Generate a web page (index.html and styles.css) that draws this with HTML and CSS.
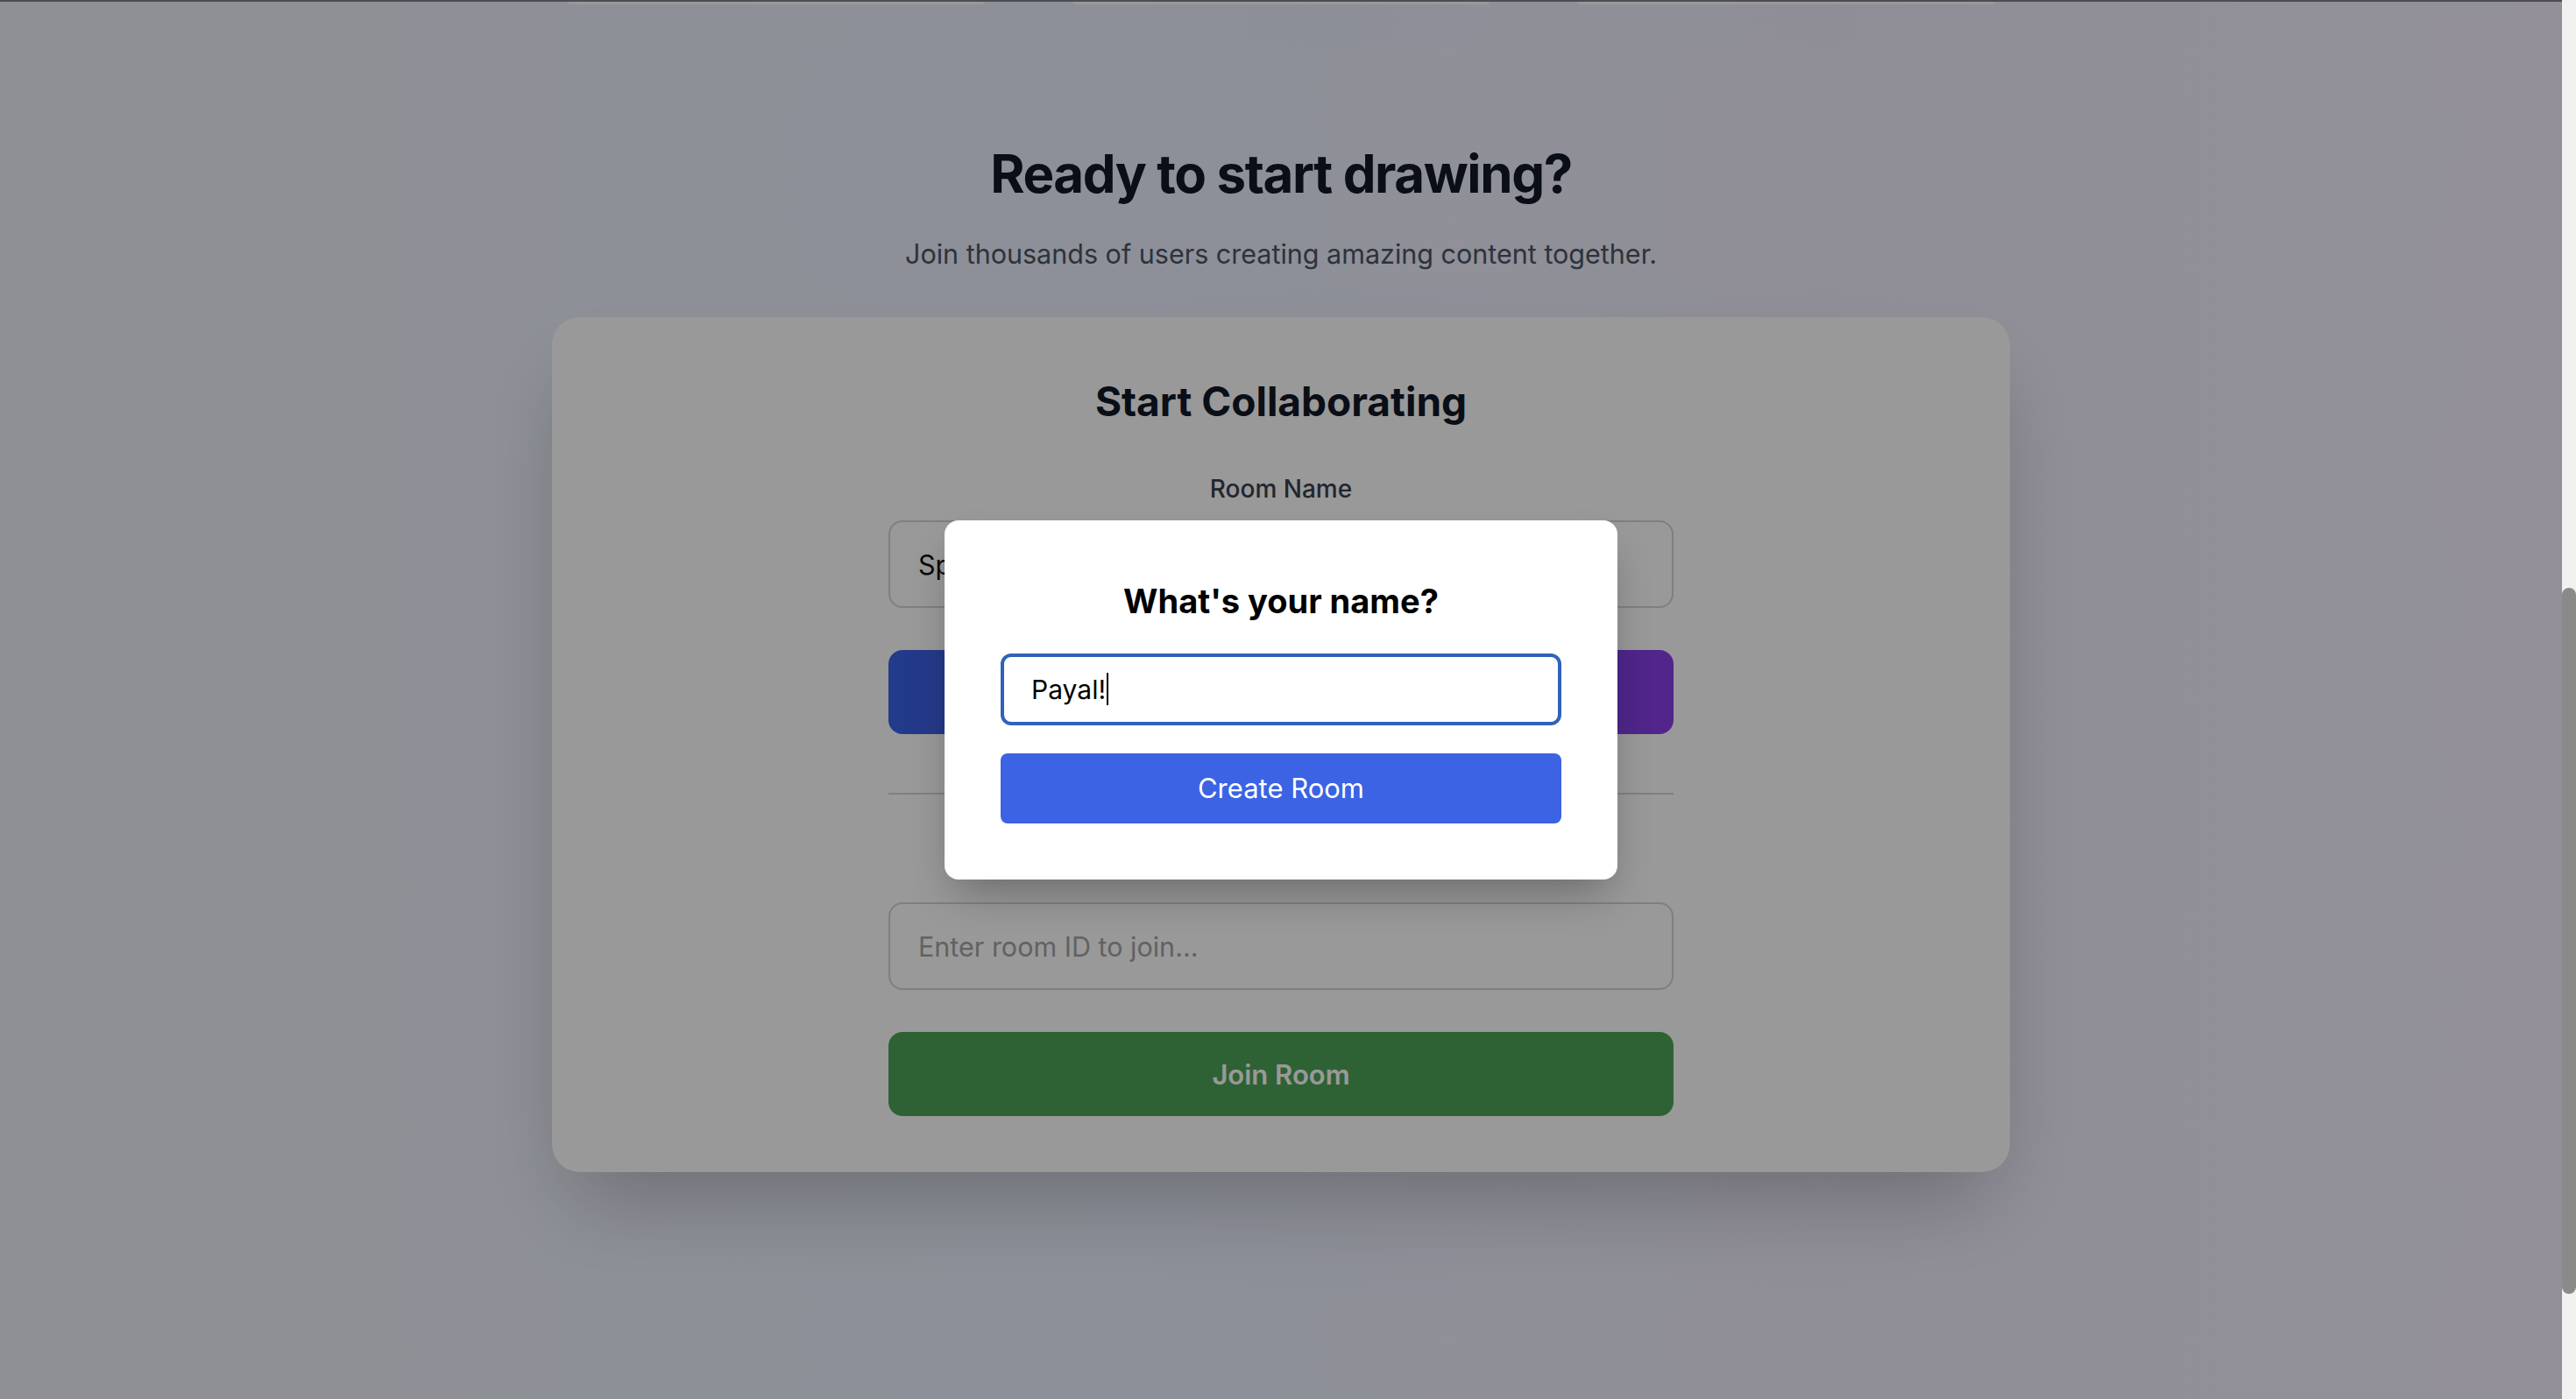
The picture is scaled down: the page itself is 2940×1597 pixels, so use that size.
FILE: index.html
```html
<!DOCTYPE html>
<html lang="en">
<head>
<meta charset="utf-8">
<title>Start Collaborating</title>
<link rel="stylesheet" href="styles.css">
</head>
<body>
<div class="window">
  <div class="page">
    <div class="topline"></div>
    <div class="features-tail">
      <div class="feature-card"></div>
      <div class="feature-card"></div>
      <div class="feature-card"></div>
    </div>
    <section class="cta">
      <h2 class="cta-title">Ready to start drawing?</h2>
      <p class="cta-sub">Join thousands of users creating amazing content together.</p>
      <div class="room-card">
        <h3 class="room-title">Start Collaborating</h3>
        <div class="room-form">
          <label class="field-label" for="room-name">Room Name</label>
          <input class="field" id="room-name" type="text" value="Sprint Planning">
          <button class="btn-gradient" type="button">Create New Room</button>
          <div class="divider"></div>
          <input class="field" type="text" placeholder="Enter room ID to join...">
          <button class="btn-join" type="button">Join Room</button>
        </div>
      </div>
    </section>
    <div class="backdrop">
      <div class="modal">
        <h4 class="modal-title">What's your name?</h4>
        <div class="name-field" role="textbox"><span>Payal!</span><span class="caret"></span></div>
        <button class="btn-create" type="button">Create Room</button>
      </div>
    </div>
  </div>
  <div class="scrollbar"><div class="thumb"></div></div>
</div>
</body>
</html>
```

FILE: styles.css
```css
html, body {
  margin: 0;
  padding: 0;
  height: 100%;
  overflow: hidden;
}

body {
  font-family: Inter, "Noto Sans", "Liberation Sans", sans-serif;
}

.window {
  display: flex;
  height: 1597px;
}

.page {
  flex: 1;
  position: relative;
  overflow: hidden;
  background: linear-gradient(90deg, #eef1f9 0%, #ecf1ff 45%, #f1eefc 75%, #f3eefd 100%);
}

.topline {
  height: 2px;
  background: #7d818a;
}

.features-tail {
  display: grid;
  grid-template-columns: repeat(3, 476px);
  column-gap: 100px;
  justify-content: center;
}

.feature-card {
  height: 3px;
  background: #ffffff;
  border-radius: 0 0 4px 4px;
  box-shadow: 0 24px 48px rgba(0, 0, 0, 0.12);
}

.cta {
  padding-top: 157px;
  text-align: center;
}

.cta-title {
  margin: 0;
  font-size: 60px;
  line-height: 72px;
  font-weight: 700;
  color: #111827;
  letter-spacing: -1.4px;
}

.cta-sub {
  margin: 32px 0 0;
  font-size: 30.5px;
  line-height: 48px;
  color: #4b5563;
}

.room-card {
  width: 1664px;
  margin: 48px auto 0;
  box-sizing: border-box;
  padding: 64px 0;
  background: #ffffff;
  border-radius: 32px;
  box-shadow: 0 50px 100px -24px rgba(0, 0, 0, 0.25);
}

.room-title {
  margin: 0;
  font-size: 46px;
  line-height: 64px;
  font-weight: 700;
  color: #111827;
}

.room-form {
  width: 896px;
  margin: 48px auto 0;
  display: flex;
  flex-direction: column;
}

.field-label {
  margin-bottom: 16px;
  font-size: 28px;
  line-height: 40px;
  font-weight: 500;
  color: #374151;
  text-align: center;
}

.field {
  height: 100px;
  box-sizing: border-box;
  padding: 0 32px;
  border: 2px solid #d1d5db;
  border-radius: 16px;
  background: #ffffff;
  font-family: Inter, "Noto Sans", sans-serif;
  font-size: 30.5px;
  color: #111111;
  outline: none;
}

.field::placeholder {
  color: #a3a3a3;
}

.btn-gradient {
  margin-top: 48px;
  height: 96px;
  border: 0;
  border-radius: 16px;
  background: linear-gradient(90deg, #3963e6 0%, #8a3ee8 100%);
  color: #ffffff;
  font-family: Inter, "Noto Sans", sans-serif;
  font-size: 32px;
  font-weight: 600;
}

.divider {
  margin: 67px 0 123px;
  height: 2px;
  background: #d1d5db;
}

.btn-join {
  margin-top: 48px;
  height: 96px;
  border: 0;
  border-radius: 16px;
  background: #4da357;
  color: #ffffff;
  font-family: Inter, "Noto Sans", sans-serif;
  font-size: 31px;
  font-weight: 600;
}

.backdrop {
  position: absolute;
  inset: 0;
  background: rgba(0, 0, 0, 0.4);
  display: flex;
  align-items: center;
  justify-content: center;
}

.modal {
  width: 768px;
  box-sizing: border-box;
  padding: 64px;
  background: #ffffff;
  border-radius: 16px;
  box-shadow: 0 25px 50px -12px rgba(0, 0, 0, 0.3);
  text-align: center;
}

.modal-title {
  margin: 0 0 32px;
  font-size: 38px;
  line-height: 56px;
  font-weight: 700;
  color: #000000;
}

.name-field {
  height: 82px;
  box-sizing: border-box;
  padding: 0 31px;
  border: 4px solid #2f63b9;
  border-radius: 12px;
  display: flex;
  align-items: center;
  font-size: 30px;
  color: #000000;
}

.caret {
  width: 2px;
  height: 37px;
  margin-left: 1px;
  background: #000000;
}

.btn-create {
  width: 100%;
  margin-top: 32px;
  height: 80px;
  border: 0;
  border-radius: 8px;
  background: #3b63e4;
  color: #ffffff;
  font-family: Inter, "Noto Sans", sans-serif;
  font-size: 31px;
  font-weight: 400;
}

.scrollbar {
  width: 16px;
  background: #f1f1f1;
}

.thumb {
  margin-top: 671px;
  height: 806px;
  border-radius: 8px;
  background: #8a8a8a;
}
```
